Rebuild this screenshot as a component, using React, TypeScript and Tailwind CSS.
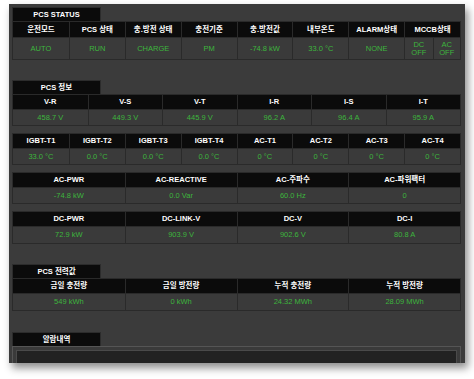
const font = { fontFamily: '"Liberation Sans", Arial, "Noto Sans CJK KR", sans-serif' };

type Cell = { label: string; value: React.ReactNode };

function SectionTab({ title }: { title: string }) {
  return (
    <div className="w-[89px] h-[14px] bg-[#0b0b0b] border border-[#2c2c2c] border-b-0 flex items-center justify-center text-[7.5px] font-bold text-white">
      {title}
    </div>
  );
}

function DataTable({ cells, cols, valueH = 'h-[16px]' }: { cells: Cell[]; cols: string; valueH?: string }) {
  return (
    <div className={`grid ${cols} border border-[#2a2a2a]`}>
      {cells.map((c, i) => (
        <div key={i} className={`flex flex-col ${i > 0 ? 'border-l border-[#2a2a2a]' : ''}`}>
          <div className="h-[14px] bg-[#0b0b0b] flex items-center justify-center text-[7.5px] font-bold text-white">
            {c.label}
          </div>
          <div className={`${valueH} bg-[#3a3a3a] border-t border-[#2a2a2a] flex items-center justify-center text-[7.5px] text-[#3db53d]`}>
            {c.value}
          </div>
        </div>
      ))}
    </div>
  );
}

export default function App() {
  const status: Cell[] = [
    { label: '운전모드', value: 'AUTO' },
    { label: 'PCS 상태', value: 'RUN' },
    { label: '충.방전 상태', value: 'CHARGE' },
    { label: '충전기준', value: 'PM' },
    { label: '충.방전값', value: '-74.8 kW' },
    { label: '내부온도', value: '33.0 °C' },
    { label: 'ALARM상태', value: 'NONE' },
  ];

  return (
    <div className="w-[474px] h-[379px] bg-white" style={font}>
      <div className="absolute left-[9px] top-[4px] w-[456px] h-[359px] bg-[#3b3b3b] overflow-hidden shadow-[3px_5px_8px_rgba(0,0,0,0.45)] pl-[3px] pr-[4px] pt-[3px]">
        {/* PCS STATUS */}
        <SectionTab title="PCS STATUS" />
        <div className="grid grid-cols-8 border border-[#2a2a2a]">
          {status.map((c, i) => (
            <div key={i} className={`flex flex-col ${i > 0 ? 'border-l border-[#2a2a2a]' : ''}`}>
              <div className="h-[15px] bg-[#0b0b0b] flex items-center justify-center text-[7.5px] font-bold text-white">
                {c.label}
              </div>
              <div className="h-[22px] bg-[#3a3a3a] border-t border-[#2a2a2a] flex items-center justify-center text-[7.5px] text-[#3db53d]">
                {c.value}
              </div>
            </div>
          ))}
          <div className="flex flex-col border-l border-[#2a2a2a]">
            <div className="h-[15px] bg-[#0b0b0b] flex items-center justify-center text-[7.5px] font-bold text-white">
              MCCB상태
            </div>
            <div className="h-[22px] grid grid-cols-2 border-t border-[#2a2a2a] text-[7.5px] leading-[8px] text-[#3db53d]">
              <div className="flex items-center justify-center text-center">DC<br />OFF</div>
              <div className="flex items-center justify-center text-center border-l border-[#2a2a2a]">AC<br />OFF</div>
            </div>
          </div>
        </div>

        {/* PCS 정보 */}
        <div className="mt-[20px]">
          <SectionTab title="PCS 정보" />
          <DataTable
            cols="grid-cols-6"
            cells={[
              { label: 'V-R', value: '458.7 V' },
              { label: 'V-S', value: '449.3 V' },
              { label: 'V-T', value: '445.9 V' },
              { label: 'I-R', value: '96.2 A' },
              { label: 'I-S', value: '96.4 A' },
              { label: 'I-T', value: '95.9 A' },
            ]}
          />
          <div className="mt-[7px]">
            <DataTable
              cols="grid-cols-8"
              cells={[
                { label: 'IGBT-T1', value: '33.0 °C' },
                { label: 'IGBT-T2', value: '0.0 °C' },
                { label: 'IGBT-T3', value: '0.0 °C' },
                { label: 'IGBT-T4', value: '0.0 °C' },
                { label: 'AC-T1', value: '0 °C' },
                { label: 'AC-T2', value: '0 °C' },
                { label: 'AC-T3', value: '0 °C' },
                { label: 'AC-T4', value: '0 °C' },
              ]}
            />
          </div>
          <div className="mt-[7px]">
            <DataTable
              cols="grid-cols-4"
              cells={[
                { label: 'AC-PWR', value: '-74.8 kW' },
                { label: 'AC-REACTIVE', value: '0.0 Var' },
                { label: 'AC-주파수', value: '60.0 Hz' },
                { label: 'AC-파워팩터', value: '0' },
              ]}
            />
          </div>
          <div className="mt-[7px]">
            <DataTable
              cols="grid-cols-4"
              valueH="h-[17px]"
              cells={[
                { label: 'DC-PWR', value: '72.9 kW' },
                { label: 'DC-LINK-V', value: '903.9 V' },
                { label: 'DC-V', value: '902.6 V' },
                { label: 'DC-I', value: '80.8 A' },
              ]}
            />
          </div>
        </div>

        {/* PCS 전력값 */}
        <div className="mt-[20px]">
          <SectionTab title="PCS 전력값" />
          <DataTable
            cols="grid-cols-4"
            valueH="h-[17px]"
            cells={[
              { label: '금일 충전량', value: '549 kWh' },
              { label: '금일 방전량', value: '0 kWh' },
              { label: '누적 충전량', value: '24.32 MWh' },
              { label: '누적 방전량', value: '28.09 MWh' },
            ]}
          />
        </div>

        {/* 알람내역 */}
        <div className="mt-[21px]">
          <SectionTab title="알람내역" />
          <div className="border border-[#555555] bg-[#3a3a3a] px-[3px] pt-[3px] h-[40px]">
            <div className="h-full bg-[#222222] border border-[#4a4a4a]" />
          </div>
        </div>
      </div>
    </div>
  );
}
